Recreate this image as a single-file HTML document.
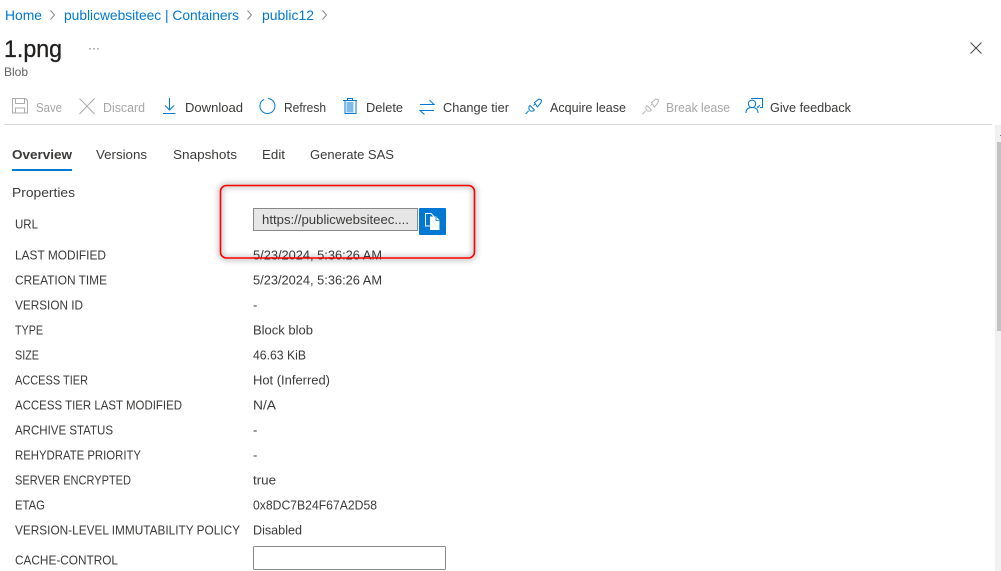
<!DOCTYPE html>
<html><head><meta charset="utf-8"><style>
html,body{margin:0;padding:0;background:#fff;width:1001px;height:571px;overflow:hidden}
svg{display:block}
text{font-family:"Liberation Sans",sans-serif;font-size:13px;fill:#3b3a39}
.l{fill:#0078d4;font-size:14px}
.d{fill:#a6a6a6}
</style></head><body>
<svg width="1001" height="571" viewBox="0 0 1001 571" xmlns="http://www.w3.org/2000/svg">
<defs><filter id="s" x="-10%" y="-20%" width="120%" height="140%"><feGaussianBlur stdDeviation="3"/></filter></defs>
<rect x="995" y="125" width="6" height="446" fill="#f1f1f1"/>
<rect x="997" y="142" width="4" height="189" fill="#c1c1c1"/>
<rect x="1000" y="135" width="1" height="1" fill="#777"/>
<text class="l" x="5" y="20" textLength="37" lengthAdjust="spacingAndGlyphs">Home</text>
<text class="l" x="64" y="20" textLength="175" lengthAdjust="spacingAndGlyphs">publicwebsiteec | Containers</text>
<text class="l" x="262" y="20" textLength="52" lengthAdjust="spacingAndGlyphs">public12</text>
<path d="M50.500 10.500l4 4.500-4 4.500M247.500 10.500l4 4.500-4 4.500M322.500 10.500l4 4.500-4 4.500" fill="none" stroke="#8a8a8a" stroke-width="1"/>
<text x="4" y="57" style="font-size:24px;fill:#201f1e" textLength="58" lengthAdjust="spacingAndGlyphs" stroke="#201f1e" stroke-width=".3">1.png</text>
<text x="88" y="52" style="font-size:12px;fill:#666">···</text>
<text x="4" y="76" style="font-size:12px;fill:#605e5c" textLength="24" lengthAdjust="spacingAndGlyphs">Blob</text>
<path d="M970.500 42.500l11 11M981.500 42.500l-11 11" stroke="#444" stroke-width="1" fill="none"/>

<g fill="none" stroke="#ababab" stroke-width="1">
<path d="M12.500 98.500h13l2 2v12.500h-15zM15.500 98.500v5h9v-5M15.500 113v-5h9v5"/>
<path d="M79.500 98.500l15 15.500M94.500 98.500l-15 15.500"/>
</g>
<text class="d" x="36" y="112" textLength="26" lengthAdjust="spacingAndGlyphs">Save</text>
<text class="d" x="103" y="112" textLength="42" lengthAdjust="spacingAndGlyphs">Discard</text>

<rect x="346.500" y="102" width="7" height="10.500" fill="#0078d4" opacity=".5"/>
<g fill="none" stroke="#0078d4" stroke-width="1">
<path d="M169.500 98v11.500M165 105.500l4.500 4.500 4.500-4.500M163 113.500h12.500"/>
<path d="M264 99.300a7.500 7.500 0 1 0 4-.8"/>
<path d="M345 100.500v13h11v-13M343 100.500h14M347.500 100v-1.500h5v1.500"/>
<path d="M420 104.500h14l-4.500-4.500M434 110.500h-14l4.500 4"/>
<path d="M525.500 114l3.200-3.200M530 105.500l4.500 4.500a3.200 3.200 0 0 1-4.500 0.500 3.200 3.200 0 0 1 0-5zM533.500 105.500l2-2M534.500 102.500l4.500-3.500 2.500 1-0.500 2.500-3.500 4.500z"/>
<path d="M746 113c0-3.800 2.300-5.500 6-5.500s6 1.700 6 5.500M752 107.500a3.700 3.700 0 1 0 0-7.400 3.700 3.700 0 0 0 0 7.400zM751 98.500h11.500v9h-2.500M757 106.500l1 1 2-2.500"/>
</g>
<g fill="none" stroke="#b5b5b5" stroke-width="1">
<path d="M642.500 114l3.200-3.200M647 105.500l4.500 4.500a3.200 3.200 0 0 1-4.500 0.500 3.200 3.200 0 0 1 0-5zM650.500 105.500l2-2M651.500 102.500l4.500-3.500 2.500 1-0.500 2.500-3.500 4.500z"/>
</g>
<text x="185" y="112" textLength="58" lengthAdjust="spacingAndGlyphs">Download</text>
<text x="284" y="112" textLength="42" lengthAdjust="spacingAndGlyphs">Refresh</text>
<text x="366" y="112" textLength="37" lengthAdjust="spacingAndGlyphs">Delete</text>
<text x="443" y="112" textLength="66" lengthAdjust="spacingAndGlyphs">Change tier</text>
<text x="550" y="112" textLength="76" lengthAdjust="spacingAndGlyphs">Acquire lease</text>
<text class="d" x="666" y="112" textLength="64" lengthAdjust="spacingAndGlyphs">Break lease</text>
<text x="770" y="112" textLength="81" lengthAdjust="spacingAndGlyphs">Give feedback</text>
<rect x="4" y="124" width="988" height="1" fill="#d6d6d6"/>

<text x="12" y="159" style="font-weight:700" textLength="60" lengthAdjust="spacingAndGlyphs">Overview</text>
<rect x="12" y="169" width="60" height="2" fill="#0078d4"/>
<text x="96" y="159" textLength="51" lengthAdjust="spacingAndGlyphs">Versions</text>
<text x="173" y="159" textLength="64" lengthAdjust="spacingAndGlyphs">Snapshots</text>
<text x="262" y="159" textLength="23" lengthAdjust="spacingAndGlyphs">Edit</text>
<text x="310" y="159" textLength="84" lengthAdjust="spacingAndGlyphs">Generate SAS</text>
<text x="12" y="197" textLength="63" lengthAdjust="spacingAndGlyphs">Properties</text>

<g transform="translate(0,-.5)">
<text x="15" y="229" textLength="23" lengthAdjust="spacingAndGlyphs">URL</text>
<text x="15" y="260" textLength="91" lengthAdjust="spacingAndGlyphs">LAST MODIFIED</text>
<text x="15" y="285" textLength="92" lengthAdjust="spacingAndGlyphs">CREATION TIME</text>
<text x="15" y="310" textLength="68" lengthAdjust="spacingAndGlyphs">VERSION ID</text>
<text x="15" y="335" textLength="28" lengthAdjust="spacingAndGlyphs">TYPE</text>
<text x="15" y="360" textLength="24" lengthAdjust="spacingAndGlyphs">SIZE</text>
<text x="15" y="385" textLength="73" lengthAdjust="spacingAndGlyphs">ACCESS TIER</text>
<text x="15" y="410" textLength="167" lengthAdjust="spacingAndGlyphs">ACCESS TIER LAST MODIFIED</text>
<text x="15" y="435" textLength="98" lengthAdjust="spacingAndGlyphs">ARCHIVE STATUS</text>
<text x="15" y="460" textLength="126" lengthAdjust="spacingAndGlyphs">REHYDRATE PRIORITY</text>
<text x="15" y="485" textLength="116" lengthAdjust="spacingAndGlyphs">SERVER ENCRYPTED</text>
<text x="15" y="510" textLength="30" lengthAdjust="spacingAndGlyphs">ETAG</text>
<text x="15" y="535" textLength="225" lengthAdjust="spacingAndGlyphs">VERSION-LEVEL IMMUTABILITY POLICY</text>
<text x="15" y="565" textLength="103" lengthAdjust="spacingAndGlyphs">CACHE-CONTROL</text>
<text x="253" y="260" textLength="129" lengthAdjust="spacingAndGlyphs">5/23/2024, 5:36:26 AM</text>
<text x="253" y="285" textLength="129" lengthAdjust="spacingAndGlyphs">5/23/2024, 5:36:26 AM</text>
<text x="253" y="310">-</text>
<text x="253" y="335" textLength="60" lengthAdjust="spacingAndGlyphs">Block blob</text>
<text x="253" y="360" textLength="53" lengthAdjust="spacingAndGlyphs">46.63 KiB</text>
<text x="253" y="385" textLength="77" lengthAdjust="spacingAndGlyphs">Hot (Inferred)</text>
<text x="253" y="410" textLength="23" lengthAdjust="spacingAndGlyphs">N/A</text>
<text x="253" y="435">-</text>
<text x="253" y="460">-</text>
<text x="253" y="485" textLength="23" lengthAdjust="spacingAndGlyphs">true</text>
<text x="253" y="510" textLength="124" lengthAdjust="spacingAndGlyphs">0x8DC7B24F67A2D58</text>
<text x="253" y="535" textLength="49" lengthAdjust="spacingAndGlyphs">Disabled</text>
</g>
<rect x="253.500" y="546.500" width="192" height="23" rx="1" fill="#fff" stroke="#8a8886"/>

<rect x="253.500" y="208.500" width="164" height="22" fill="#e6e6e6" stroke="#8a8886"/>
<text x="262" y="224" textLength="147" lengthAdjust="spacingAndGlyphs">https://publicwebsiteec....</text>
<rect x="419" y="208" width="27" height="27" rx="1" fill="#0078d4"/>
<path d="M425.500 213.500h5.500l2.500 2.500v10h-8z" fill="none" stroke="#fff" stroke-width="1"/>
<path d="M430 216.500h6l3.500 3.500v10h-9.500z" fill="#fff"/>
<path d="M436 217v3.500h3.500" fill="none" stroke="#0078d4" stroke-width=".8"/>

<rect x="220.500" y="185.500" width="254" height="73" rx="6" fill="none" stroke="#000" stroke-opacity=".28" stroke-width="4" filter="url(#s)"/>
<rect x="220.500" y="185.500" width="254" height="72.500" rx="6" fill="none" stroke="#f00" stroke-width="1.600"/>
</svg>
</body></html>
